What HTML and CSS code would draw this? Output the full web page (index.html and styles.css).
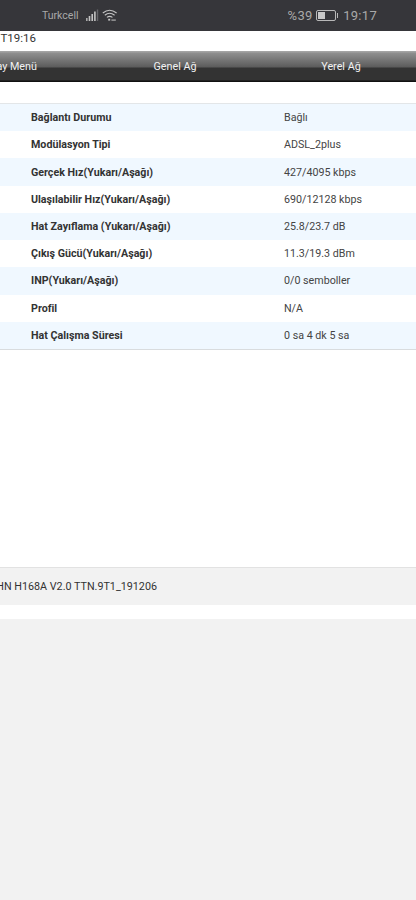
FILE: index.html
```html
<!DOCTYPE html>
<html lang="tr">
<head>
<meta charset="utf-8">
<title>Bağlantı Durumu</title>
<link rel="stylesheet" href="styles.css">
</head>
<body>
<header class="status">
  <span class="carrier">Turkcell</span>
  <svg class="signal" width="14" height="13" viewBox="0 0 14 13">
    <rect x="0" y="9" width="1.6" height="3" fill="#a8a8a8"/>
    <rect x="2.7" y="7" width="1.6" height="5" fill="#c4c4c4"/>
    <rect x="5.4" y="5" width="1.6" height="7" fill="#c4c4c4"/>
    <rect x="8.1" y="2.5" width="1.6" height="9.5" fill="#c4c4c4"/>
    <rect x="10.8" y="0.5" width="1.4" height="11.5" fill="#66666a"/>
  </svg>
  <svg class="wifi" width="16" height="13" viewBox="0 0 16 13" fill="none" stroke="#c4c4c4" stroke-width="1.1">
    <path d="M0.8 4 Q7.5 -1.6 14.6 4"/>
    <path d="M2.8 6.2 Q7.5 2.4 12.6 6.2"/>
    <path d="M4.9 8.4 Q7.5 6.4 10.5 8.4"/>
    <rect x="6.2" y="9.8" width="2" height="1.8" fill="#c4c4c4" stroke="none"/>
    <rect x="9.4" y="10.4" width="4.4" height="1.4" fill="#a0a0a0" stroke="none"/>
  </svg>
  <span class="status-right">
    <span class="battery-pct">%39</span>
    <span class="battery"><span class="battery-fill"></span></span>
    <span class="battery-cap"></span>
    <span class="clock">19:17</span>
  </span>
</header>
<div class="timestamp"><span>2020-01-01T19:16</span></div>
<nav class="nav">
  <a class="nav-item">Kolay Menü</a>
  <a class="nav-item">Genel Ağ</a>
  <a class="nav-item">Yerel Ağ</a>
</nav>
<main class="panel">
  <div class="row"><span class="label">Bağlantı Durumu</span><span class="value">Bağlı</span></div>
  <div class="row"><span class="label">Modülasyon Tipi</span><span class="value">ADSL_2plus</span></div>
  <div class="row"><span class="label">Gerçek Hız(Yukarı/Aşağı)</span><span class="value">427/4095 kbps</span></div>
  <div class="row"><span class="label">Ulaşılabilir Hız(Yukarı/Aşağı)</span><span class="value">690/12128 kbps</span></div>
  <div class="row"><span class="label">Hat Zayıflama (Yukarı/Aşağı)</span><span class="value">25.8/23.7 dB</span></div>
  <div class="row"><span class="label">Çıkış Gücü(Yukarı/Aşağı)</span><span class="value">11.3/19.3 dBm</span></div>
  <div class="row"><span class="label">INP(Yukarı/Aşağı)</span><span class="value">0/0 semboller</span></div>
  <div class="row"><span class="label">Profil</span><span class="value">N/A</span></div>
  <div class="row"><span class="label">Hat Çalışma Süresi</span><span class="value">0 sa 4 dk 5 sa</span></div>
</main>
<footer class="footer"><div class="model"><span>ZXHN H168A V2.0 TTN.9T1_191206</span></div></footer>
<div class="backdrop"></div>
</body>
</html>
```
FILE: styles.css
```css
* { box-sizing: border-box; }
html, body { margin: 0; padding: 0; }
body {
  width: 416px;
  height: 900px;
  overflow: hidden;
  background: #fff;
  font-family: Roboto, "Noto Sans", sans-serif;
  display: flex;
  flex-direction: column;
}
.status {
  height: 31px;
  flex: none;
  background: #36363a;
  color: #a9a9a9;
  display: flex;
  align-items: center;
  padding: 0 39px 0 42px;
  font-size: 10.5px;
}
.signal { margin-left: 7px; }
.wifi { margin-left: 2px; }
.status-right {
  margin-left: auto;
  display: flex;
  align-items: center;
  font-size: 13px;
  letter-spacing: 0.3px;
}
.battery {
  width: 20px;
  height: 11px;
  margin-left: 3px;
  border: 1px solid #b8b8b8;
  border-radius: 2px;
  padding: 1px;
  display: flex;
}
.battery-fill { width: 7px; background: #c8c8c8; }
.battery-cap { width: 1.5px; height: 5px; background: #b8b8b8; margin-left: 1px; }
.clock { margin-left: 5px; }
.timestamp {
  height: 20px;
  flex: none;
  width: 36px;
  display: flex;
  justify-content: flex-end;
  font-size: 11.5px;
  line-height: 15px;
  color: #333;
  white-space: nowrap;
}
.nav {
  height: 31px;
  flex: none;
  margin-left: -74px;
  width: 498px;
  display: grid;
  grid-template-columns: repeat(3, 166px);
  align-items: center;
  background: linear-gradient(#a4a4a4 0, #a4a4a4 1px, #8f8f8f 2px, #5c5c5c 16px, #333 17px, #333 29px, #111 30px);
}
.nav-item {
  text-align: center;
  font-size: 10.75px;
  color: #f2f2f2;
  padding-bottom: 1px;
}
.panel {
  flex: none;
  margin-top: 21px;
  border-top: 1px solid #e3e6e8;
  border-bottom: 1px solid #d9dcde;
  height: 247px;
  display: flex;
  flex-direction: column;
}
.row {
  flex: 1;
  display: flex;
  align-items: center;
  padding-left: 31px;
  font-size: 10.7px;
  color: #333;
}
.row:nth-child(odd) { background: #f0f8ff; }
.label { width: 253px; font-weight: 700; flex: none; color: #333; }
.value { color: #444; }
.footer {
  flex: none;
  height: 38px;
  margin-top: 217px;
  background: #f2f2f2;
  border-top: 1px solid #e2e2e2;
  display: flex;
  align-items: center;
  font-size: 10.75px;
  color: #333;
}
.model {
  width: 157px;
  display: flex;
  justify-content: flex-end;
  white-space: nowrap;
}
.backdrop { flex: 1; margin-top: 14px; background: #f2f2f2; }
```
